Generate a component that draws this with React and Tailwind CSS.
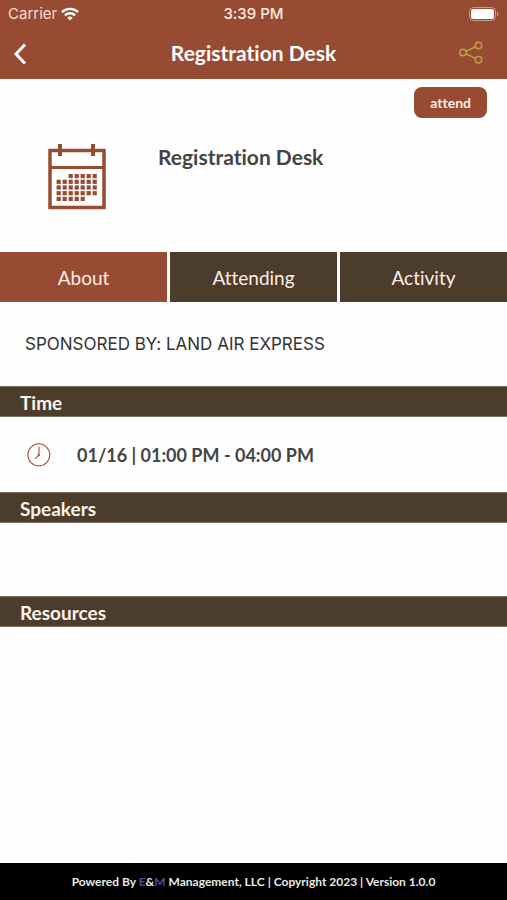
import { useState } from "react";

const TABS = ["About", "Attending", "Activity"];

// [first column, last column] of filled days for every week row
const WEEKS = [[2, 6], [0, 6], [0, 6], [0, 6], [0, 4]];

function WifiIcon() {
  return (
    <svg width="18" height="14" viewBox="0 0 18 14" fill="none" stroke="#fff" strokeWidth="2.4" aria-hidden="true">
      <path d="M0.9 5.2a11.5 11.5 0 0 1 16.2 0" />
      <path d="M3.9 8.3a7.2 7.2 0 0 1 10.2 0" />
      <path d="M9 13.6L6.2 10.8a4 4 0 0 1 5.6 0z" fill="#fff" stroke="none" />
    </svg>
  );
}

function BatteryIcon() {
  return (
    <svg width="30" height="14" viewBox="0 0 30 14" aria-hidden="true">
      <rect x="0.5" y="0.5" width="26" height="13" rx="4" fill="none" stroke="#fff" strokeOpacity="0.45" />
      <rect x="2" y="2" width="23" height="10" rx="2.5" fill="#fff" />
      <path d="M28 4.8a2.4 2.4 0 0 1 0 4.4z" fill="#fff" fillOpacity="0.5" />
    </svg>
  );
}

function ShareIcon() {
  return (
    <svg width="24" height="24" viewBox="0 0 24 24" fill="none" stroke="#b9a044" strokeWidth="1.5" aria-hidden="true">
      <circle cx="4" cy="11.5" r="3.2" />
      <circle cx="19.5" cy="4.5" r="3.2" />
      <circle cx="19.5" cy="18.8" r="3.2" />
      <path d="M7 10.2L16.5 5.8M7 12.8L16.5 17.4" />
    </svg>
  );
}

function CalendarIcon() {
  return (
    <svg width="58" height="66" viewBox="0 0 58 66" fill="none" stroke="#964b32" aria-hidden="true">
      <rect x="2" y="6.5" width="54" height="57" strokeWidth="3.5" />
      <path d="M2 23.5H56" strokeWidth="3" />
      <path d="M12 0V12M45 0V12" strokeWidth="4" />
      {WEEKS.map(([from, to], row) =>
        Array.from({ length: to - from + 1 }, (_, i) => (
          <rect
            key={`${row}-${i}`}
            x={8.6 + (from + i) * 6}
            y={30 + row * 5.7}
            width="4.2"
            height="4.2"
            fill="#964b32"
            stroke="none"
          />
        ))
      )}
    </svg>
  );
}

function ClockIcon() {
  return (
    <svg width="24" height="24" viewBox="0 0 24 24" fill="none" stroke="#a8553f" strokeWidth="1.1" aria-hidden="true">
      <circle cx="11.8" cy="11.8" r="11" />
      <path d="M12 3.8V12L8 15.8" />
      <circle cx="11.8" cy="12" r="1.2" fill="#a8553f" stroke="none" />
    </svg>
  );
}

function SectionTitle({ children }) {
  return (
    <h2 className="border-y border-[#7c7062] bg-[#4c3c2b] px-5 pt-0.5 text-[19px] leading-[27px] font-bold text-[#fdf3ea]">
      {children}
    </h2>
  );
}

export default function App() {
  const [tab, setTab] = useState("About");

  return (
    <div className="flex min-h-screen flex-col bg-[#fefefe] font-['Lato',sans-serif] text-[#444] [font-variant-ligatures:none]">
      <header className="bg-[#964b32] text-white">
        {/* Status bar */}
        <div className="grid h-7 grid-cols-3 items-center px-2 font-['Inter',sans-serif] text-[15px]">
          <div className="flex items-center gap-1 text-[#f6ded3]">
            Carrier
            <WifiIcon />
          </div>
          <div className="text-center font-medium text-[#fcebe3]">3:39 PM</div>
          <div className="flex justify-end">
            <BatteryIcon />
          </div>
        </div>

        {/* Navigation */}
        <div className="grid h-[51px] grid-cols-[1fr_auto_1fr] items-center pb-0.5">
          <button type="button" aria-label="Back" className="flex pl-3">
            <svg width="16" height="24" viewBox="0 0 16 24" fill="none" stroke="#fff" strokeWidth="3" aria-hidden="true">
              <path d="M13 3.5L4 13L13 22.5" />
            </svg>
          </button>
          <h1 className="text-[21px] font-bold">Registration Desk</h1>
          <button type="button" aria-label="Share" className="flex justify-end pr-6">
            <ShareIcon />
          </button>
        </div>
      </header>

      <main className="flex-1">
        <div className="px-5 pt-2">
          <div className="flex justify-end">
            <button type="button" className="h-[31px] rounded-lg bg-[#964b32] px-4 text-sm font-bold text-[#fdeee6]">
              attend
            </button>
          </div>
          <div className="flex gap-[52px] pt-[26px] pb-[42px] pl-7">
            <CalendarIcon />
            <div className="text-[21px] leading-[26px] font-bold">Registration Desk</div>
          </div>
        </div>

        {/* Tabs */}
        <div className="grid grid-cols-3 gap-[3px]" role="tablist">
          {TABS.map((name) => (
            <button
              key={name}
              type="button"
              role="tab"
              aria-selected={tab === name}
              onClick={() => setTab(name)}
              className={`h-[50px] pt-0.5 text-[19px] text-[#fdeee6] ${tab === name ? "bg-[#964b32]" : "bg-[#4c3c2b]"}`}
            >
              {name}
            </button>
          ))}
        </div>

        <p className="px-[25px] py-[30px] font-['Inter',sans-serif] text-[17px] leading-6 text-[#333]">
          SPONSORED BY: LAND AIR EXPRESS
        </p>

        <SectionTitle>Time</SectionTitle>
        <div className="flex h-[75px] items-center gap-[26px] px-[27px]">
          <ClockIcon />
          <span className="text-lg font-bold">01/16 | 01:00 PM - 04:00 PM</span>
        </div>

        <SectionTitle>Speakers</SectionTitle>
        <div className="h-[73px]" />

        <SectionTitle>Resources</SectionTitle>
      </main>

      <footer className="bg-black text-center text-xs leading-[37px] font-bold text-[#e8e8e8]">
        Powered By <span className="text-[#5546a5]">E</span>&amp;<span className="text-[#5546a5]">M</span> Management, LLC | Copyright 2023 | Version 1.0.0
      </footer>
    </div>
  );
}
